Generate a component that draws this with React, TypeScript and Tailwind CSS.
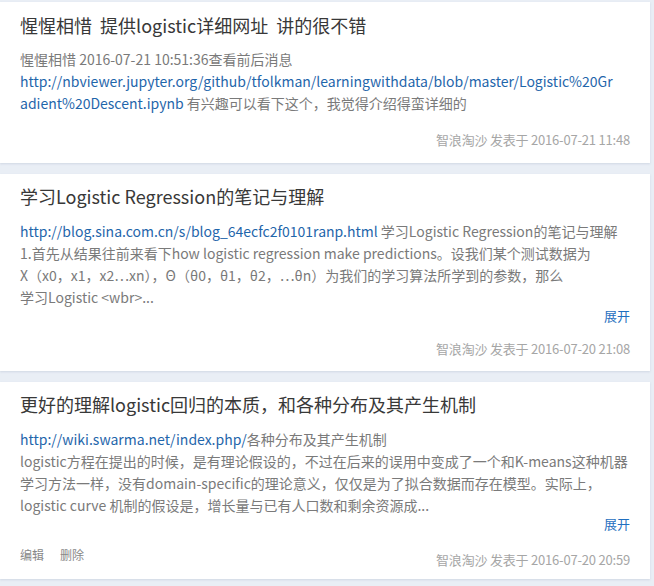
const font = { fontFamily: '"Noto Sans CJK SC", sans-serif' };

const Link = ({ children }: { children: React.ReactNode }) => (
  <span className="text-[#1f66ab]">{children}</span>
);

const Footer = ({ time }: { time: string }) => (
  <div className="text-[13px] leading-[22px] tracking-[-0.2px] text-[#a6a6a6] whitespace-nowrap">
    智浪淘沙 发表于 {time}
  </div>
);

export default function App() {
  return (
    <div className="min-h-screen bg-[#e9eef5] pt-[2px] pr-[4px]" style={font}>
      <div className="flex flex-col gap-[11px]">
        {/* card 1 */}
        <div className="bg-white shadow-[0_1px_2px_rgba(160,175,195,0.35)] px-5 pt-[11px] pb-[12px]">
          <h3 className="text-[18px] leading-[24px] text-[#383838] whitespace-pre">惺惺相惜  提供logistic详细网址  讲的很不错</h3>
          <div className="mt-[11px] text-[14px] leading-[22px] text-[#7a7a7a] whitespace-nowrap">
            <div>惺惺相惜 2016-07-21 10:51:36查看前后消息</div>
            <div><Link>http://nbviewer.jupyter.org/github/tfolkman/learningwithdata/blob/master/Logistic%20Gr</Link></div>
            <div><Link>adient%20Descent.ipynb</Link> 有兴趣可以看下这个，我觉得介绍得蛮详细的</div>
          </div>
          <div className="mt-[15px] flex justify-end">
            <Footer time="2016-07-21 11:48" />
          </div>
        </div>

        {/* card 2 */}
        <div className="bg-white shadow-[0_1px_2px_rgba(160,175,195,0.35)] px-5 pt-[10px] pb-[11px]">
          <h3 className="text-[18px] leading-[24px] text-[#383838] whitespace-nowrap">学习Logistic Regression的笔记与理解</h3>
          <div className="mt-[12px] text-[14px] leading-[22px] text-[#7a7a7a] whitespace-nowrap">
            <div><Link>http://blog.sina.com.cn/s/blog_64ecfc2f0101ranp.html</Link> 学习Logistic Regression的笔记与理解</div>
            <div>1.首先从结果往前来看下how logistic regression make predictions。设我们某个测试数据为</div>
            <div>X（x0，x1，x2⋯xn），Θ（θ0，θ1，θ2，⋯θn）为我们的学习算法所学到的参数，那么</div>
            <div>{"学习Logistic <wbr>..."}</div>
          </div>
          <div className="flex justify-end text-[13px] leading-[16px] text-[#1f6fc0]">展开</div>
          <div className="mt-[14px] flex justify-end">
            <Footer time="2016-07-20 21:08" />
          </div>
        </div>

        {/* card 3 */}
        <div className="bg-white shadow-[0_1px_2px_rgba(160,175,195,0.35)] px-5 pt-[10px] pb-[8px]">
          <h3 className="text-[18px] leading-[24px] text-[#383838] whitespace-nowrap">更好的理解logistic回归的本质，和各种分布及其产生机制</h3>
          <div className="mt-[12px] text-[14px] leading-[22px] text-[#7a7a7a] whitespace-nowrap">
            <div><Link>http://wiki.swarma.net/index.php/</Link>各种分布及其产生机制</div>
            <div>logistic方程在提出的时候，是有理论假设的，不过在后来的误用中变成了一个和K-means这种机器</div>
            <div>学习方法一样，没有domain-specific的理论意义，仅仅是为了拟合数据而存在模型。实际上，</div>
            <div>logistic curve 机制的假设是，增长量与已有人口数和剩余资源成...</div>
          </div>
          <div className="flex justify-end text-[13px] leading-[16px] text-[#1f6fc0]">展开</div>
          <div className="mt-[17px] flex items-start justify-between">
            <div className="flex gap-[16px] text-[12px] leading-[12px] text-[#888]">
              <span>编辑</span>
              <span>删除</span>
            </div>
            <Footer time="2016-07-20 20:59" />
          </div>
        </div>
      </div>
    </div>
  );
}
